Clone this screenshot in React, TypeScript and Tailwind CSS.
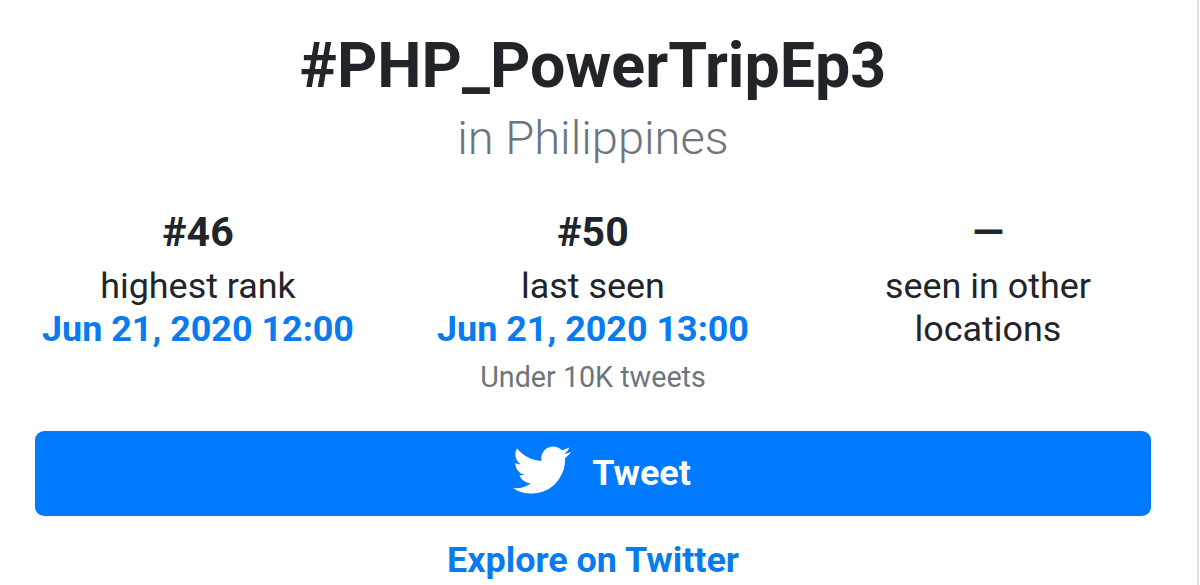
import { FaTwitter } from "react-icons/fa"

type StatProps = {
    value: string
    label: string
    date?: string
    note?: string
}

const Stat: React.FC<StatProps> = ({ value, label, date, note }) => {
    return (
        <div className="flex w-[395px] flex-col items-center text-center">
            <span className="text-[41px] leading-[48px] font-bold">{value}</span>
            <span className="mt-[9px] w-[300px] text-[35.9px] leading-[43px]">{label}</span>
            {date && <a className="text-[35.9px] leading-[43px] font-bold text-[#087bf0]">{date}</a>}
            {note && <span className="mt-[8px] text-[28.7px] leading-[36px] text-[#6c757d]">{note}</span>}
        </div>
    )
}

export default function App() {
    return (
        <main className="h-[585px] w-[1200px] overflow-hidden bg-white font-['Roboto',sans-serif] text-[#212529]">
            <div className="h-full w-[1199px] border-r-2 border-[#dfdfdf]">
                <div className="flex w-[1186px] flex-col items-center pt-[28px]">
                    <h1 className="text-[62.7px] leading-[76px] font-bold">#PHP_PowerTripEp3</h1>
                    <h2 className="mt-[6px] text-[47.1px] leading-[56px] font-light text-[#6c757d]">in Philippines</h2>
                    <section className="mt-[42px] flex h-[223px] w-[1185px]">
                        <Stat value="#46" label="highest rank" date="Jun 21, 2020 12:00" />
                        <Stat value="#50" label="last seen" date="Jun 21, 2020 13:00" note="Under 10K tweets" />
                        <Stat value="—" label="seen in other locations" />
                    </section>
                    <button className="flex h-[85px] w-[1116px] items-center justify-center gap-[21px] rounded-[9px] bg-[#007bff] pl-[18px] text-[35.9px] font-bold text-white">
                        <FaTwitter size={58} className="mb-[8px]" />
                        <span>Tweet</span>
                    </button>
                    <a className="mt-[22px] text-[35.9px] leading-[44px] font-bold text-[#087bf0]">Explore on Twitter</a>
                </div>
            </div>
        </main>
    )
}
